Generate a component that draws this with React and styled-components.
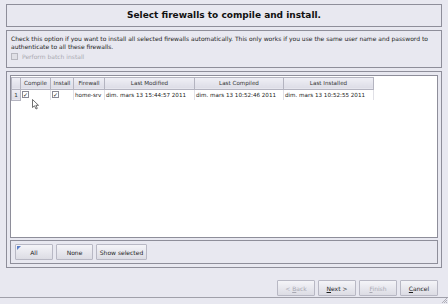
import React from 'react';
import styled, { createGlobalStyle } from 'styled-components';

const GlobalStyle = createGlobalStyle`
  html, body { margin: 0; padding: 0; }
  body {
    background: #e8e8f0;
    font-family: "DejaVu Sans", sans-serif;
    color: #1a1a1a;
  }
`

const Page = styled.div`
  position: relative;
  width: 448px;
  height: 304px;
  box-sizing: border-box;
  background: #e8e8f0;
  display: flex;
  flex-direction: column;
  padding: 4px 6px 0 6px;
  overflow: hidden;
`

const Frame = styled.div`
  border: 1px solid #8e8e9a;
  background: #e8e8f0;
  box-sizing: border-box;
`

const TitleBox = styled(Frame)`
  height: 23px;
  display: flex;
  align-items: center;
  justify-content: center;
  font-weight: bold;
  font-size: 9px;
  color: #111;
`

const DescBox = styled(Frame)`
  margin-top: 3px;
  height: 38px;
  padding: 4px 4px 0 4px;
  font-size: 6px;
  line-height: 8px;
  color: #222;
`

const BatchRow = styled.div`
  display: flex;
  align-items: center;
  gap: 4px;
  margin-top: 2px;
  color: #a8a8b0;
`

const Check = styled.span`
  width: 5px;
  height: 5px;
  border: 1px solid ${p => (p.disabled ? '#b8b8c0' : '#8a8a94')};
  background: ${p => (p.disabled ? '#e0e0e6' : '#fff')};
  display: inline-flex;
  align-items: center;
  justify-content: center;
  font-size: 6px;
  line-height: 5px;
  color: #222;
`

const GroupBox = styled(Frame)`
  margin-top: 3px;
  height: 199px;
  padding: 3px;
  display: flex;
  flex-direction: column;
`

const TableView = styled.div`
  flex: 1;
  background: #fff;
  border: 1px solid #8e8e9a;
  overflow: hidden;
`

const Table = styled.table`
  border-collapse: collapse;
  font-size: 5.6px;
  table-layout: fixed;
  width: 362px;
  margin-top: 1px;
`

const Th = styled.th`
  height: 11px;
  padding: 0;
  font-weight: normal;
  color: #333;
  background: linear-gradient(#f0f0f6, #dcdce6);
  border: 1px solid #b4b4c0;
  text-align: center;
  overflow: hidden;
  white-space: nowrap;
`

const Td = styled.td`
  height: 10px;
  padding: 0 1px;
  border-right: 1px solid #e0e0e6;
  white-space: nowrap;
  overflow: hidden;
  color: #222;
  text-align: left;
`

const RowHead = styled.td`
  height: 10px;
  padding: 0;
  background: linear-gradient(#f0f0f6, #dcdce6);
  border: 1px solid #b4b4c0;
  text-align: center;
  color: #333;
`

const ButtonBar = styled(Frame)`
  margin-top: 2px;
  height: 24px;
  padding: 3px 4px;
  display: flex;
  gap: 3px;
  align-items: center;
`

const Btn = styled.button`
  position: relative;
  height: 16px;
  width: ${p => p.w}px;
  padding: 0;
  font-family: "DejaVu Sans", sans-serif;
  font-size: 6px;
  color: ${p => (p.disabled ? '#a8a8b2' : '#1e1e1e')};
  background: linear-gradient(#f4f4f8, #dcdce4);
  border: 1px solid #b8b8c4;
  border-radius: 1px;
  u { text-decoration: underline; }
`

const FocusMark = styled.span`
  position: absolute;
  left: 1px;
  top: 1px;
  width: 0;
  height: 0;
  border-top: 4px solid #5a7ec8;
  border-right: 4px solid transparent;
`

const Footer = styled.div`
  margin: 0 -6px;
  flex: 1;
  display: flex;
  flex-direction: column;
`

const FooterRow = styled.div`
  height: 30px;
  border-bottom: 1px solid #a0a0aa;
  display: flex;
  justify-content: flex-end;
  align-items: flex-end;
  gap: 3px;
  padding: 0 10px 1px 0;
  box-sizing: border-box;
`

const Grip = styled.div`
  flex: 1;
  display: flex;
  justify-content: flex-end;
  align-items: flex-end;
  padding: 0 1px 1px 0;
`

const Cursor = styled.svg`
  position: absolute;
  left: 32px;
  top: 99px;
`

const columns = [
  { label: '', w: 9 },
  { label: 'Compile', w: 30 },
  { label: 'Install', w: 23 },
  { label: 'Firewall', w: 31 },
  { label: 'Last Modified', w: 90 },
  { label: 'Last Compiled', w: 89 },
  { label: 'Last Installed', w: 90 },
]

const row = {
  firewall: 'home-srv',
  modified: 'dim. mars 13 15:44:57 2011',
  compiled: 'dim. mars 13 10:52:46 2011',
  installed: 'dim. mars 13 10:52:55 2011',
}

const App = () => {
  return (
    <Page>
      <GlobalStyle />
      <TitleBox>Select firewalls to compile and install.</TitleBox>
      <DescBox>
        Check this option if you want to install all selected firewalls automatically. This only works if you use the same user name and password to authenticate to all these firewalls.
        <BatchRow>
          <Check disabled />
          Perform batch install
        </BatchRow>
      </DescBox>
      <GroupBox>
        <TableView>
          <Table>
            <colgroup>
              {columns.map((c, i) => (
                <col key={i} style={{ width: c.w }} />
              ))}
            </colgroup>
            <thead>
              <tr>
                {columns.map((c, i) => (
                  <Th key={i}>{c.label}</Th>
                ))}
              </tr>
            </thead>
            <tbody>
              <tr>
                <RowHead>1</RowHead>
                <Td><Check>✓</Check></Td>
                <Td><Check>✓</Check></Td>
                <Td>{row.firewall}</Td>
                <Td>{row.modified}</Td>
                <Td>{row.compiled}</Td>
                <Td>{row.installed}</Td>
              </tr>
            </tbody>
          </Table>
        </TableView>
        <ButtonBar>
          <Btn w={38}><FocusMark />All</Btn>
          <Btn w={37}>None</Btn>
          <Btn w={51}>Show selected</Btn>
        </ButtonBar>
      </GroupBox>
      <Footer>
        <FooterRow>
          <Btn w={38} disabled>&lt; <u>B</u>ack</Btn>
          <Btn w={38}><u>N</u>ext &gt;</Btn>
          <Btn w={38} disabled><u>F</u>inish</Btn>
          <Btn w={38}><u>C</u>ancel</Btn>
        </FooterRow>
        <Grip>
          <svg width="5" height="5" viewBox="0 0 5 5">
            <path d="M5 0 L0 5 M5 2 L2 5 M5 4 L4 5" stroke="#a0a0aa" strokeWidth="0.8" />
          </svg>
        </Grip>
      </Footer>
      <Cursor width="8" height="11" viewBox="0 0 8 11">
        <path d="M0.5 0.5 L0.5 8.5 L2.5 6.8 L4 10 L5.3 9.4 L3.9 6.3 L6.5 6.3 Z" fill="#fff" stroke="#333" strokeWidth="0.7" />
      </Cursor>
    </Page>
  )
}

export default App
